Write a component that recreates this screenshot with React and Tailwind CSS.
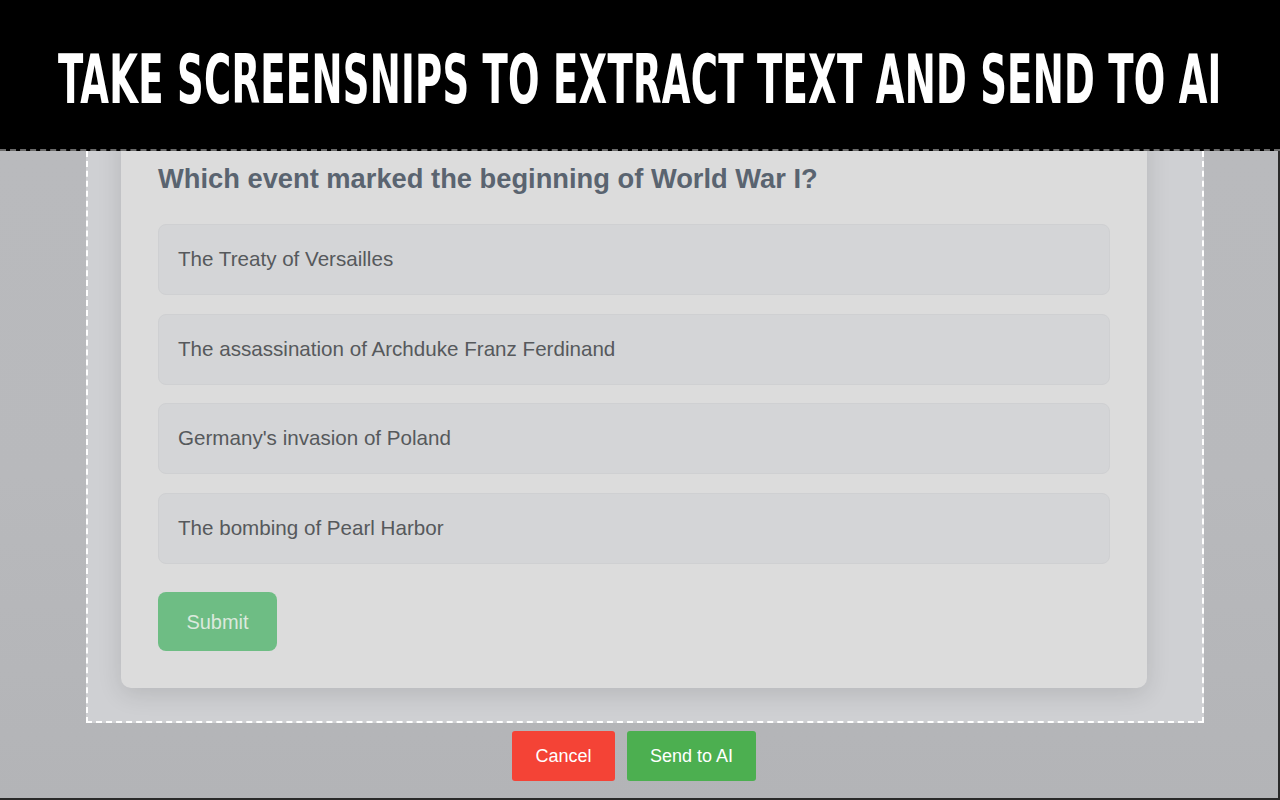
import React from "react";

const options = [
  "The Treaty of Versailles",
  "The assassination of Archduke Franz Ferdinand",
  "Germany's invasion of Poland",
  "The bombing of Pearl Harbor",
];

const App = () => {
  return (
    <div className="w-[1280px] h-[800px] flex flex-col overflow-hidden bg-[#2a2a2a] font-['Liberation_Sans',Arial,sans-serif]">
      {/* banner */}
      <div className="relative z-10 h-[151px] bg-black flex items-center justify-center border-b-2 border-dashed border-[#6b6b6b]">
        <h1 className="text-white font-bold uppercase text-[68px] leading-none tracking-[0.5px] scale-x-[0.605] whitespace-nowrap font-['DejaVu_Sans_Condensed','Liberation_Sans_Narrow',sans-serif] mt-[10px]">
          Take screensnips to extract text and send to AI
        </h1>
      </div>

      {/* screen area */}
      <div className="flex-1 flex flex-col overflow-hidden mr-[2px] mb-[2px] bg-gradient-to-b from-[#b9babd] via-[#b8b9bc] to-[#b3b4b7]">
        <div className="ml-[86px] w-[1118px] h-[572px] border-2 border-t-0 border-dashed border-white bg-[#cfd0d3] flex flex-col">
          <div className="ml-[33px] w-[1026px] -mt-[30px] pt-[42px] pb-[37px] px-[37px] bg-[#dcdcdc] rounded-[10px] shadow-[0_6px_24px_rgba(0,0,0,0.12)]">
            <h2 className="text-[27.3px] leading-[32px] font-bold text-[#5a6470] mb-[29px]">
              Which event marked the beginning of World War I?
            </h2>
            <div className="flex flex-col gap-[18.7px]">
              {options.map((opt) => (
                <div
                  key={opt}
                  className="h-[71px] flex items-center px-[19px] rounded-[8px] bg-[#d4d5d7] border border-[#cfd0d2] text-[20.6px] text-[#56595c]"
                >
                  {opt}
                </div>
              ))}
            </div>
            <button className="mt-[28px] w-[119px] h-[59px] rounded-[8px] bg-[#6ebd84] text-[#dbe9dd] text-[20px]">
              Submit
            </button>
          </div>
        </div>

        <div className="flex gap-[12px] pl-[512px] mt-[8px]">
          <button className="w-[103px] h-[50px] rounded-[3px] bg-[#f44336] text-white text-[18px]">
            Cancel
          </button>
          <button className="w-[129px] h-[50px] rounded-[3px] bg-[#4caf50] text-white text-[18px]">
            Send to AI
          </button>
        </div>
      </div>
    </div>
  );
};

export default App;
